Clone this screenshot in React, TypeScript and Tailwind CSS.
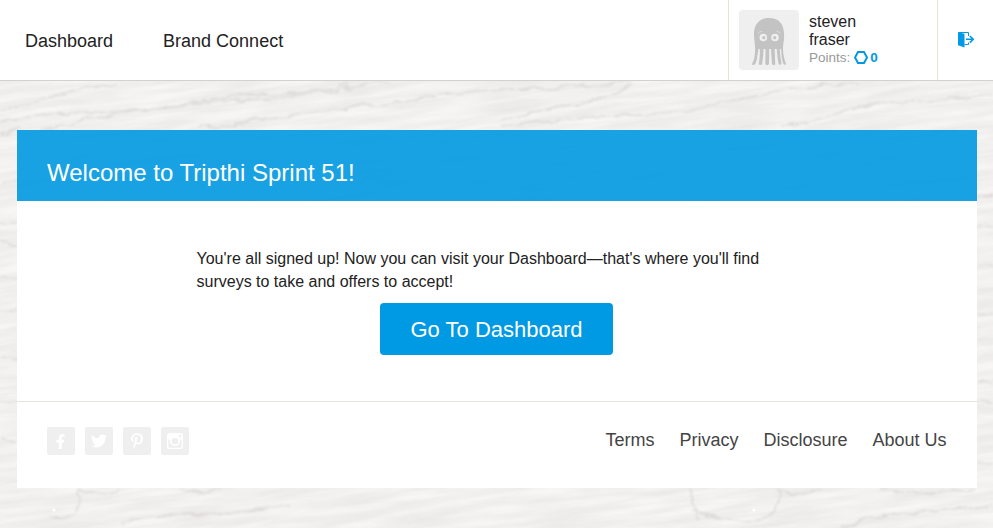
import React from 'react';
import { FaFacebookF, FaTwitter, FaPinterestP } from 'react-icons/fa';

const grainLines = [
  'M0 110 C40 104 60 88 120 84',
  'M0 122 C60 108 110 118 180 104 S300 98 350 84',
  'M40 129 C90 122 130 106 210 102 S320 92 390 82',
  'M200 128 C280 118 350 108 440 96 S560 92 634 81',
  'M500 120 C560 104 600 104 634 84',
  'M500 128 C580 112 650 122 720 104 S790 90 860 82',
  'M780 128 C840 114 860 104 910 102 S960 98 993 94',
  'M0 133 L20 128', 'M0 182 L17 180', 'M0 223 L17 222', 'M0 240 L17 245',
  'M0 276 L17 279', 'M0 312 L17 309', 'M0 357 L17 359', 'M0 402 L17 401', 'M0 439 L17 441',
  'M977 197 L993 194', 'M977 228 L993 227', 'M977 265 L993 266', 'M977 317 L993 314',
  'M977 384 L993 382', 'M977 401 L993 403', 'M977 463 L993 462',
  'M78 489 C90 500 108 494 120 490',
  'M77 488 C86 506 72 520 48 518',
  'M180 489 C195 494 205 490 222 489',
  'M120 525 C150 508 210 520 290 506',
  'M690 489 C698 502 690 514 700 520',
  'M778 489 C790 500 810 494 822 489',
  'M777 489 C785 507 768 521 745 521 C720 519 704 512 690 510',
  'M840 528 C880 510 940 513 993 504',
  'M880 489 C910 498 940 492 977 490',
];

function WoodBackdrop() {
  return (
    <svg className="absolute inset-0 -z-10 h-full w-full" viewBox="0 0 993 528" preserveAspectRatio="none" aria-hidden="true">
      <filter id="grain" x="0" y="0" width="100%" height="100%" colorInterpolationFilters="sRGB">
        <feTurbulence type="fractalNoise" baseFrequency="0.014 0.13" numOctaves="5" seed="8" />
        <feColorMatrix values="0 0 0 0 0.63  0 0 0 0 0.58  0 0 0 0 0.57  0.22 0 0 0 -0.05" />
      </filter>
      <filter id="soft" x="0" y="0" width="993" height="528" filterUnits="userSpaceOnUse">
        <feTurbulence type="fractalNoise" baseFrequency="0.05 0.09" numOctaves="3" seed="3" />
        <feDisplacementMap in="SourceGraphic" scale="9" xChannelSelector="R" yChannelSelector="G" />
        <feGaussianBlur stdDeviation="0.9" />
      </filter>
      <rect width="993" height="528" fill="#f7f6f5" />
      <g transform="rotate(-7 496 264)">
        <rect x="-80" y="-80" width="1160" height="700" filter="url(#grain)" />
      </g>
      <g fill="none" stroke="#d3cfce" strokeWidth="1.7" opacity="0.65" filter="url(#soft)">
        {grainLines.map((d) => <path key={d} d={d} />)}
      </g>
      <circle cx="54" cy="510" r="1.6" fill="#fff" />
      <circle cx="754" cy="510" r="1.6" fill="#fff" />
    </svg>
  );
}

function Octopus() {
  return (
    <svg viewBox="0 0 60 60" className="h-[60px] w-[60px] rounded-[4px] bg-[#efefef]">
      <path
        fill="#c3c3c3"
        d="M30 8C20 8 15 14.500 15 24C15 31 16.500 35 16 42C15.600 48 14.700 51 13 54C13.200 55.300 15 55.500 16.200 54C18.300 50.500 18.500 44 19.500 39H20.800C21.200 45 20.300 50 19.700 54C20.200 55.300 22.500 55.300 23.100 54C24 49 24.300 44 24.600 39H26.500C26.600 45 26.300 49 26.400 54C26.800 55.500 29.500 55.500 29.900 54C30.200 49 30.200 44 30.100 39H32C32.300 44 32.500 49 33 54C33.500 55.500 36 55.500 36.200 54C36.200 49 35.900 44 35.600 39H37.700C38.200 44 38.600 49 39.700 54C40.400 55.300 42.500 55 42.500 53.500C41.900 49 41 45 40.800 39H42C42.600 45 42.700 50 44.500 54C45.500 55.300 47.200 55 47 53.500C44.500 48 43.500 41 44.300 34C45 30 45.300 27 45 23C44.500 14 40 8 30 8Z"
      />
      <g fill="#efefef"><circle cx="24.300" cy="27.500" r="3.800" /><circle cx="36" cy="27.500" r="3.800" /></g>
      <g fill="#c3c3c3"><circle cx="24.800" cy="27.700" r="1.600" /><circle cx="35.700" cy="27.700" r="1.600" /></g>
      <path d="M18.800 23.500Q20 21.600 23 21.400M37.500 21.400Q40.300 21.700 41.500 23.500" fill="none" stroke="#dedede" strokeWidth="0.9" />
    </svg>
  );
}

function ExitIcon() {
  return (
    <svg width="17" height="17" viewBox="0 0 17 17">
      <path d="M0 1.200L6.500 2.800V16.500L0 14.200Z" fill="#0099e5" />
      <path d="M0.500 1.500H10.500V5M10.500 11.500V13.500H6.500" fill="none" stroke="#0099e5" strokeWidth="1" />
      <path d="M8 8.300H15M11.800 5L15.200 8.300L11.800 11.600" fill="none" stroke="#0099e5" strokeWidth="1.600" />
    </svg>
  );
}

function InstagramGlyph() {
  return (
    <svg width="16" height="16" viewBox="0 0 16 16">
      <path
        fill="#fff"
        fillRule="evenodd"
        d="M2.500 0H13.500Q16 0 16 2.500V13.500Q16 16 13.500 16H2.500Q0 16 0 13.500V2.500Q0 0 2.500 0ZM12 1.800V4.200H14.300V1.800ZM1.400 6.500V13.500Q1.400 14.700 2.600 14.700H13.400Q14.600 14.700 14.600 13.500V6.500H12.700A5 5 0 1 1 3.300 6.500ZM8 5A3.300 3.300 0 1 0 8 11.600A3.300 3.300 0 1 0 8 5Z"
      />
    </svg>
  );
}

function SocialTile({ children, label }: { children: React.ReactNode; label: string }) {
  return (
    <a aria-label={label} className="flex h-7 w-7 items-center justify-center rounded-[2px] bg-[#efefef] text-white">
      {children}
    </a>
  );
}

export default function App() {
  return (
    <div className="relative isolate h-[528px] overflow-hidden font-['Liberation_Sans',Arial,sans-serif] text-[#222]">
      <WoodBackdrop />
      <header className="flex h-[81px] border-b border-[#d3d1d0] bg-white">
        <nav className="flex grow items-center gap-[50px] pl-[25px] pt-[2px] text-[18px]">
          <a>Dashboard</a>
          <a>Brand Connect</a>
        </nav>
        <div className="flex w-[209px] gap-[10px] border-l border-[#e5e4db] pl-[10px] pt-[10px]">
          <Octopus />
          <div className="pt-[3px]">
            <div className="w-[60px] text-[16px] leading-[18px]">steven fraser</div>
            <div className="flex h-[18px] items-center text-[13.5px] text-[#999]">
              <span>Points:</span>
              <svg width="14" height="13" viewBox="0 0 14 13" className="mb-[1px] ml-[4px]">
                <path d="M4 1H10L13 6.500L10 12H4L1 6.500Z" fill="none" stroke="#0099e5" strokeWidth="2" />
              </svg>
              <b className="ml-[2px] text-[#0099e5]">0</b>
            </div>
          </div>
        </div>
        <div className="w-[56px] border-l border-[#e5e4db] pl-[20px] pt-[31px]">
          <ExitIcon />
        </div>
      </header>

      <main className="ml-[17px] mt-[49px] w-[960px]">
        <h1 className="h-[71px] bg-[#0099e1]/90 pl-[30px] pt-[29px] text-[24px] leading-[28px] text-white">
          Welcome to Tripthi Sprint 51!
        </h1>
        <section className="flex h-[200px] flex-col items-center bg-white pt-[46px]">
          <p className="mr-[1px] w-[600px] text-[16px] leading-[23px]">
            You're all signed up! Now you can visit your Dashboard—that's where you'll find surveys to take and offers to accept!
          </p>
          <button className="mr-[1px] mt-[10px] h-[52px] w-[233px] rounded-[4px] bg-[#0099e3] text-[22px] text-white">
            Go To Dashboard
          </button>
        </section>
        <footer className="flex h-[87px] justify-between border-t border-[#e5e4db] bg-white pl-[30px] pr-[30.5px] pt-[25px]">
          <div className="flex gap-[10px]">
            <SocialTile label="Facebook"><FaFacebookF size={15} className="mr-[2px]" /></SocialTile>
            <SocialTile label="Twitter"><FaTwitter size={16} className="mr-[1px]" /></SocialTile>
            <SocialTile label="Pinterest"><FaPinterestP size={16} className="mr-[1px]" /></SocialTile>
            <SocialTile label="Instagram"><InstagramGlyph /></SocialTile>
          </div>
          <nav className="flex gap-[25px] text-[18px] leading-[26px] text-[#444]">
            <a>Terms</a>
            <a>Privacy</a>
            <a>Disclosure</a>
            <a>About Us</a>
          </nav>
        </footer>
      </main>
    </div>
  );
}
